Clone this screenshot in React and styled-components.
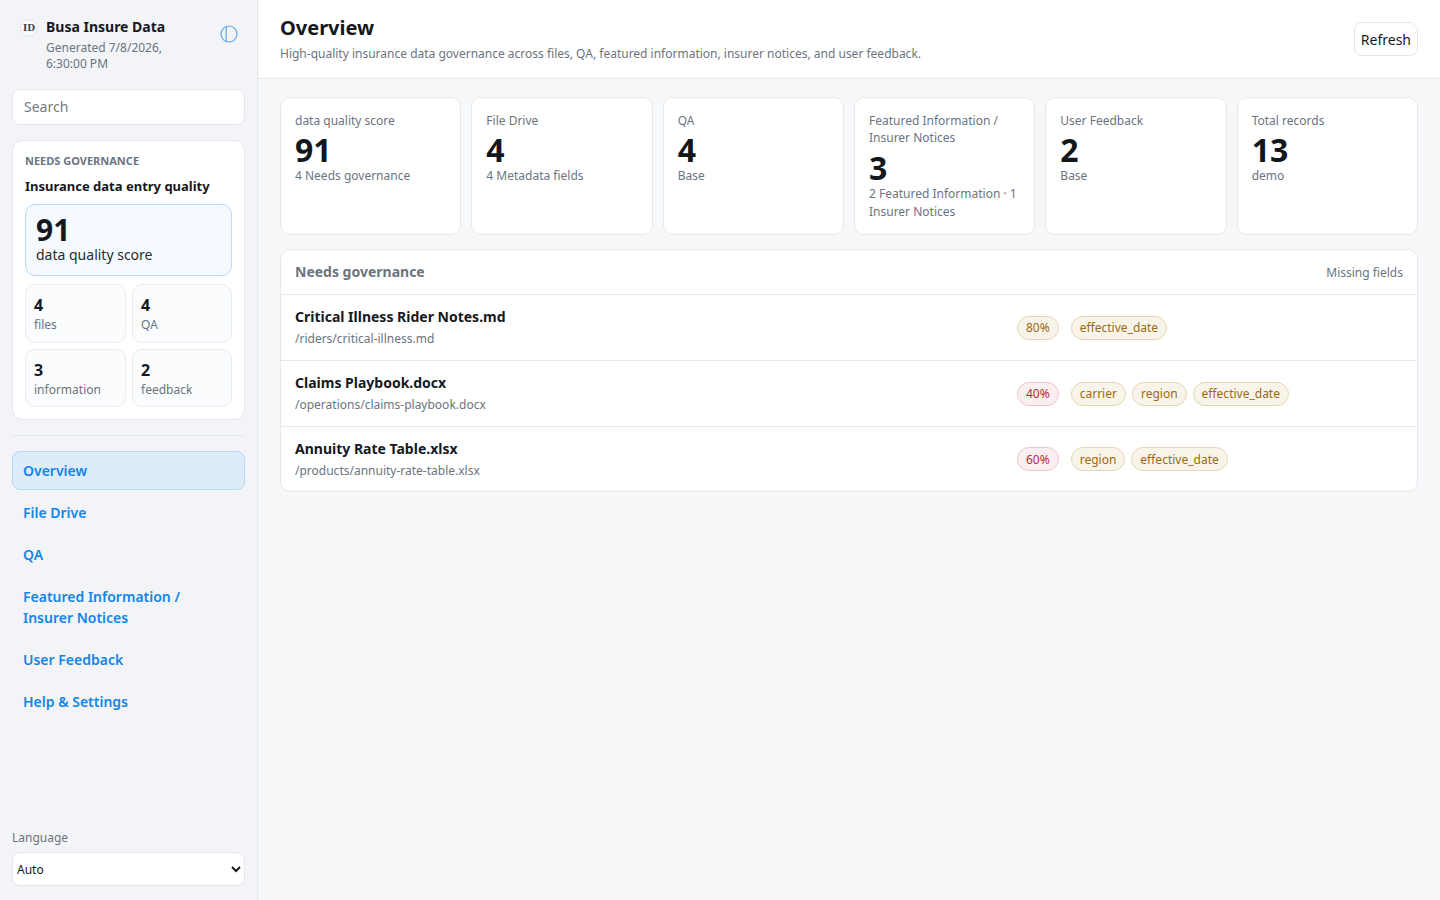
import React from 'react';
import styled, { createGlobalStyle } from 'styled-components';

const GlobalStyle = createGlobalStyle`
  html, body {
    margin: 0;
    padding: 0;
    height: 100%;
  }
  body {
    background: #f6f8fa;
    color: #15191e;
    font-family: "Noto Sans", "Liberation Sans", sans-serif;
  }
  * {
    box-sizing: border-box;
  }
`;

const Shell = styled.div`
  display: grid;
  grid-template-columns: 258px 1fr;
  height: 900px;
  overflow: hidden;
`;

const Sidebar = styled.aside`
  display: flex;
  flex-direction: column;
  padding: 17px 12px 14px;
  background: #f2f4f7;
  border-right: 1px solid #e4e7eb;
`;

const Brand = styled.div`
  display: flex;
  align-items: flex-start;
  padding: 0 7px 0 8px;
  height: 72px;
`;

const BrandMark = styled.span`
  display: flex;
  align-items: center;
  justify-content: center;
  flex: none;
  width: 18px;
  height: 18px;
  margin: 2px 8px 0 0;
  border: 1px solid #e2e5e9;
  border-radius: 50%;
  background: #f8f9fb;
  color: #3a4048;
  font-family: "DejaVu Serif", serif;
  font-size: 9px;
  font-weight: 700;
`;

const BrandText = styled.div`
  flex: 1;
  min-width: 0;
`;

const BrandTitle = styled.div`
  font-size: 14px;
  line-height: 19px;
  font-weight: 700;
`;

const BrandMeta = styled.div`
  width: 130px;
  margin-top: 4px;
  color: #6b7480;
  font-size: 12px;
  line-height: 16px;
`;

const ToggleButton = styled.span`
  display: flex;
  margin-top: 8px;
  color: #5aa6ea;
`;

const SearchInput = styled.input`
  flex: none;
  width: 100%;
  height: 36px;
  padding: 0 11px 2px;
  border: 1px solid #e4e7eb;
  border-radius: 8px;
  background: #fff;
  color: #15191e;
  font: 14px "Noto Sans", sans-serif;
  &::placeholder {
    color: #737b86;
    opacity: 1;
  }
`;

const SummaryCard = styled.section`
  margin-top: 15px;
  padding: 12px;
  border: 1px solid #e6e9ed;
  border-radius: 10px;
  background: #fff;
`;

const Eyebrow = styled.div`
  color: #6b7480;
  font-size: 11px;
  line-height: 16px;
  font-weight: 700;
  text-transform: uppercase;
`;

const SummaryTitle = styled.div`
  margin-top: 8px;
  font-size: 13px;
  line-height: 18px;
  font-weight: 700;
`;

const ScoreBox = styled.div`
  height: 72px;
  margin-top: 9px;
  padding: 10px 10px 0;
  border: 1px solid #bcdcf6;
  border-radius: 10px;
  background: #f4faff;
`;

const ScoreValue = styled.div`
  font-size: 30px;
  line-height: 30px;
  font-weight: 700;
`;

const ScoreLabel = styled.div`
  font-size: 14px;
  line-height: 19px;
  color: #262c33;
`;

const MiniGrid = styled.div`
  display: grid;
  grid-template-columns: 101px 100px;
  grid-template-rows: 59px 58px;
  gap: 6px;
  margin-top: 8px;
`;

const MiniCard = styled.div`
  padding: 9px 8px 0;
  border: 1px solid #e8ebef;
  border-radius: 10px;
  background: #fafcfe;
`;

const MiniValue = styled.div`
  font-size: 16px;
  line-height: 22px;
  font-weight: 700;
`;

const MiniLabel = styled.div`
  color: #6b7480;
  font-size: 12px;
  line-height: 18px;
`;

const Divider = styled.hr`
  width: 100%;
  margin: 15px 0;
  border: 0;
  border-top: 1px solid #e4e7eb;
`;

const Nav = styled.nav`
  display: flex;
  flex-direction: column;
  gap: 3px;
`;

const NavLink = styled.a`
  display: block;
  padding: ${p => (p.$active ? '8px 10px' : '8px 24px 8px 10px')};
  border: 1px solid ${p => (p.$active ? '#b6d7f5' : 'transparent')};
  border-radius: 8px;
  background: ${p => (p.$active ? '#dcecfb' : 'transparent')};
  color: #1384e8;
  font-size: 14px;
  line-height: 21px;
  font-weight: 600;
`;

const SidebarFooter = styled.div`
  margin-top: auto;
`;

const FooterLabel = styled.label`
  display: block;
  margin-bottom: 5px;
  color: #6b7480;
  font-size: 12px;
  line-height: 18px;
`;

const LanguageSelect = styled.select`
  display: block;
  width: 100%;
  height: 34px;
  border: 1px solid #e4e7eb;
  border-radius: 8px;
  background: #fff;
  color: #15191e;
  font: 12px "Noto Sans", sans-serif;
`;

const Main = styled.main`
  display: flex;
  flex-direction: column;
  min-width: 0;
`;

const PageHeader = styled.header`
  display: flex;
  align-items: center;
  justify-content: space-between;
  height: 79px;
  padding: 0 22px;
  border-bottom: 1px solid #e6e9ed;
  background: #fff;
`;

const PageHeading = styled.div`
  margin-top: -2px;
`;

const PageTitle = styled.h1`
  margin: 0;
  font-size: 20px;
  line-height: 27px;
  font-weight: 700;
`;

const PageSubtitle = styled.p`
  margin: 4px 0 0;
  color: #6b7480;
  font-size: 12px;
  line-height: 18px;
`;

const RefreshButton = styled.button`
  height: 34px;
  padding: 0 6px;
  border: 1px solid #e4e7eb;
  border-radius: 8px;
  background: #fff;
  color: #15191e;
  font: 14px "Noto Sans", sans-serif;
`;

const Content = styled.div`
  display: flex;
  flex-direction: column;
  gap: 14px;
  padding: 18px 22px;
`;

const StatGrid = styled.div`
  display: grid;
  grid-template-columns: repeat(6, 1fr);
  gap: 10px;
`;

const StatCard = styled.article`
  height: 138px;
  padding: 14px;
  border: 1px solid #e6e9ed;
  border-radius: 10px;
  background: #fff;
`;

const StatLabel = styled.div`
  color: #6b7480;
  font-size: 12px;
  line-height: 1.45;
`;

const StatValue = styled.div`
  margin-top: 5px;
  font-size: 32px;
  line-height: 32px;
  font-weight: 700;
  color: #12171c;
`;

const StatNote = styled.div`
  margin-top: 1px;
  color: #6b7480;
  font-size: 12px;
  line-height: 18px;
`;

const Panel = styled.section`
  border: 1px solid #e6e9ed;
  border-radius: 10px;
  background: #fff;
  overflow: hidden;
`;

const PanelHead = styled.div`
  display: flex;
  align-items: center;
  justify-content: space-between;
  height: 45px;
  padding: 0 14px;
  border-bottom: 1px solid #e6e9ed;
`;

const PanelTitle = styled.div`
  padding-bottom: 2px;
  color: #6b7480;
  font-size: 14px;
  font-weight: 700;
`;

const PanelHint = styled.div`
  color: #6b7480;
  font-size: 12px;
`;

const Row = styled.div`
  display: grid;
  grid-template-columns: 722px 1fr;
  align-items: center;
  height: 66px;
  padding: 0 14px;
  border-bottom: 1px solid #e6e9ed;
  &:last-child {
    height: 64px;
    border-bottom: 0;
  }
`;

const FileName = styled.div`
  font-size: 14px;
  line-height: 20px;
  font-weight: 700;
`;

const FilePath = styled.div`
  margin-top: 3px;
  color: #6b7480;
  font-size: 12px;
  line-height: 18px;
`;

const Tags = styled.div`
  display: flex;
  align-items: center;
  gap: 6px;
`;

const Pill = styled.span`
  display: inline-flex;
  align-items: center;
  height: 24px;
  padding: 0 8px;
  border: 1px solid ${p => (p.$danger ? '#eec6c9' : '#e6d7b4')};
  border-radius: 999px;
  background: ${p => (p.$danger ? '#fbeef0' : '#f8f4ea')};
  color: ${p => (p.$danger ? '#b5302f' : '#9a6a14')};
  font-size: 12px;
  margin-right: ${p => (p.$score ? '6px' : '0')};
`;

const navItems = ['File Drive', 'QA', 'Featured Information / Insurer Notices', 'User Feedback', 'Help & Settings'];

const miniStats = [
  { value: 4, label: 'files' },
  { value: 4, label: 'QA' },
  { value: 3, label: 'information' },
  { value: 2, label: 'feedback' },
];

const stats = [
  { label: 'data quality score', value: 91, note: '4 Needs governance' },
  { label: 'File Drive', value: 4, note: '4 Metadata fields' },
  { label: 'QA', value: 4, note: 'Base' },
  { label: 'Featured Information / Insurer Notices', value: 3, note: '2 Featured Information · 1 Insurer Notices' },
  { label: 'User Feedback', value: 2, note: 'Base' },
  { label: 'Total records', value: 13, note: 'demo' },
];

const files = [
  { name: 'Critical Illness Rider Notes.md', path: '/riders/critical-illness.md', score: '80%', missing: ['effective_date'] },
  { name: 'Claims Playbook.docx', path: '/operations/claims-playbook.docx', score: '40%', danger: true, missing: ['carrier', 'region', 'effective_date'] },
  { name: 'Annuity Rate Table.xlsx', path: '/products/annuity-rate-table.xlsx', score: '60%', danger: true, missing: ['region', 'effective_date'] },
];

const App = () => (
  <Shell>
    <GlobalStyle />
    <Sidebar>
      <Brand>
        <BrandMark>ID</BrandMark>
        <BrandText>
          <BrandTitle>Busa Insure Data</BrandTitle>
          <BrandMeta>Generated 7/8/2026, 6:30:00 PM</BrandMeta>
        </BrandText>
        <ToggleButton>
          <svg width="18" height="18" viewBox="0 0 18 18" fill="none" stroke="currentColor" strokeWidth="1.2">
            <circle cx="9" cy="9" r="8" />
            <path d="M6.2 1.5v15" />
          </svg>
        </ToggleButton>
      </Brand>
      <SearchInput placeholder="Search" />
      <SummaryCard>
        <Eyebrow>Needs governance</Eyebrow>
        <SummaryTitle>Insurance data entry quality</SummaryTitle>
        <ScoreBox>
          <ScoreValue>91</ScoreValue>
          <ScoreLabel>data quality score</ScoreLabel>
        </ScoreBox>
        <MiniGrid>
          {miniStats.map(item => (
            <MiniCard key={item.label}>
              <MiniValue>{item.value}</MiniValue>
              <MiniLabel>{item.label}</MiniLabel>
            </MiniCard>
          ))}
        </MiniGrid>
      </SummaryCard>
      <Divider />
      <Nav>
        <NavLink $active>Overview</NavLink>
        {navItems.map(item => (
          <NavLink key={item}>{item}</NavLink>
        ))}
      </Nav>
      <SidebarFooter>
        <FooterLabel>Language</FooterLabel>
        <LanguageSelect defaultValue="Auto">
          <option>Auto</option>
        </LanguageSelect>
      </SidebarFooter>
    </Sidebar>
    <Main>
      <PageHeader>
        <PageHeading>
          <PageTitle>Overview</PageTitle>
          <PageSubtitle>
            High-quality insurance data governance across files, QA, featured information, insurer notices, and user feedback.
          </PageSubtitle>
        </PageHeading>
        <RefreshButton>Refresh</RefreshButton>
      </PageHeader>
      <Content>
        <StatGrid>
          {stats.map(stat => (
            <StatCard key={stat.label}>
              <StatLabel>{stat.label}</StatLabel>
              <StatValue>{stat.value}</StatValue>
              <StatNote>{stat.note}</StatNote>
            </StatCard>
          ))}
        </StatGrid>
        <Panel>
          <PanelHead>
            <PanelTitle>Needs governance</PanelTitle>
            <PanelHint>Missing fields</PanelHint>
          </PanelHead>
          {files.map(file => (
            <Row key={file.name}>
              <div>
                <FileName>{file.name}</FileName>
                <FilePath>{file.path}</FilePath>
              </div>
              <Tags>
                <Pill $score $danger={file.danger}>{file.score}</Pill>
                {file.missing.map(field => (
                  <Pill key={field}>{field}</Pill>
                ))}
              </Tags>
            </Row>
          ))}
        </Panel>
      </Content>
    </Main>
  </Shell>
);

export default App;
